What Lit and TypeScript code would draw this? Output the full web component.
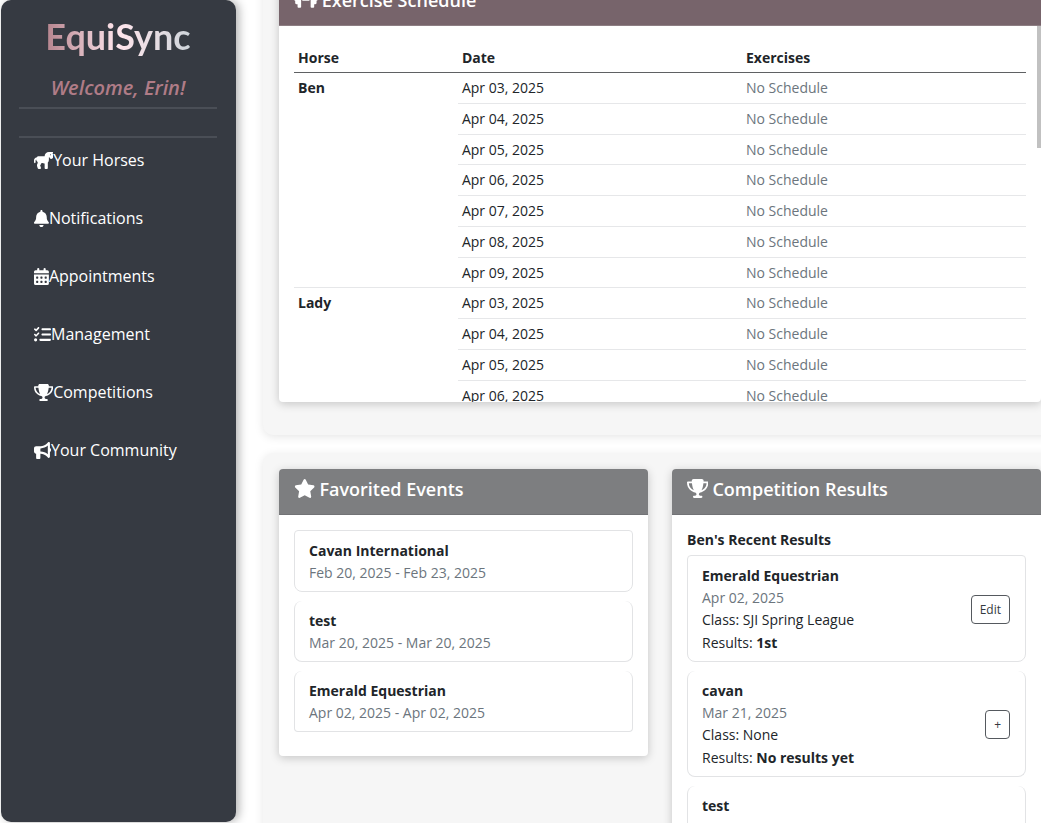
import { LitElement, html, css, svg } from "lit";
import { customElement, property } from "lit/decorators.js";

interface Icon {
  w: number;
  d: string;
}

const icons: Record<string, Icon> = {
  horse: {
    w: 576,
    d: "M448 238.1V160h16l9.8 19.6c12.5 25.1 42.2 36.4 68.3 26c20.5-8.2 33.9-28 33.9-50.1V80c0-19.1-8.4-36.3-21.7-48H560c8.8 0 16-7.2 16-16s-7.2-16-16-16H480 448C377.3 0 320 57.3 320 128H224 203.2 148.8c-30.7 0-57.6 16.3-72.5 40.8C33.2 174.5 0 211.4 0 256v56c0 13.3 10.7 24 24 24s24-10.7 24-24V256c0-13.4 6.6-25.2 16.7-32.5c1.6 13 6.3 25.4 13.6 36.4l28.2 42.4c8.3 12.4 6.4 28.7-1.2 41.6c-16.5 28-20.6 62.2-10 93.9l17.5 52.4c4.4 13.1 16.6 21.9 30.4 21.9h33.7c21.8 0 37.3-21.4 30.4-42.1l-20.8-62.5c-2.1-6.4-.5-13.4 4.3-18.2l12.7-12.7c13.2-13.2 20.6-31.1 20.6-49.7c0-2.3-.1-4.6-.3-6.9l84 24c4.1 1.2 8.2 2.1 12.3 2.8V480c0 17.7 14.3 32 32 32h32c17.7 0 32-14.3 32-32V315.7c19.2-19.2 31.5-45.7 32-75.7h0v-1.9zM496 64a16 16 0 1 1 0 32 16 16 0 1 1 0-32z",
  },
  dumbbell: {
    w: 640,
    d: "M96 64c0-17.7 14.3-32 32-32h32c17.7 0 32 14.3 32 32V224v64V448c0 17.7-14.3 32-32 32H128c-17.7 0-32-14.3-32-32V384H64c-17.7 0-32-14.3-32-32V288c-17.7 0-32-14.3-32-32s14.3-32 32-32V160c0-17.7 14.3-32 32-32H96V64zm448 0v64h32c17.7 0 32 14.3 32 32v64c17.7 0 32 14.3 32 32s-14.3 32-32 32v64c0 17.7-14.3 32-32 32H544v64c0 17.7-14.3 32-32 32H480c-17.7 0-32-14.3-32-32V288 224 64c0-17.7 14.3-32 32-32h32c17.7 0 32 14.3 32 32zM416 224v64H224V224H416z",
  },
  bell: {
    w: 448,
    d: "M224 0c-17.7 0-32 14.3-32 32V51.2C119 66 64 130.6 64 208v18.8c0 47-17.3 92.4-48.5 127.6l-7.4 8.3c-8.4 9.4-10.4 22.9-5.3 34.4S19.4 416 32 416H416c12.6 0 24-7.4 29.2-18.9s3.1-25-5.3-34.4l-7.4-8.3C401.3 319.2 384 273.9 384 226.8V208c0-77.4-55-142-128-156.8V32c0-17.7-14.3-32-32-32zm45.3 493.3c12-12 18.7-28.3 18.7-45.3H224 160c0 17 6.7 33.3 18.7 45.3s28.3 18.7 45.3 18.7s33.3-6.7 45.3-18.7z",
  },
  calendar: {
    w: 448,
    d: "M128 0a32 32 0 0 1 32 32v32h128V32a32 32 0 0 1 64 0v32h48a48 48 0 0 1 48 48v48H0v-48a48 48 0 0 1 48-48h48V32a32 32 0 0 1 32-32zM0 192h448v272a48 48 0 0 1-48 48H48a48 48 0 0 1-48-48zM64 272v32a16 16 0 0 0 16 16h32a16 16 0 0 0 16-16v-32a16 16 0 0 0-16-16H80a16 16 0 0 0-16 16zM192 272v32a16 16 0 0 0 16 16h32a16 16 0 0 0 16-16v-32a16 16 0 0 0-16-16h-32a16 16 0 0 0-16 16zM320 272v32a16 16 0 0 0 16 16h32a16 16 0 0 0 16-16v-32a16 16 0 0 0-16-16h-32a16 16 0 0 0-16 16zM64 400v32a16 16 0 0 0 16 16h32a16 16 0 0 0 16-16v-32a16 16 0 0 0-16-16H80a16 16 0 0 0-16 16zM192 400v32a16 16 0 0 0 16 16h32a16 16 0 0 0 16-16v-32a16 16 0 0 0-16-16h-32a16 16 0 0 0-16 16zM320 400v32a16 16 0 0 0 16 16h32a16 16 0 0 0 16-16v-32a16 16 0 0 0-16-16h-32a16 16 0 0 0-16 16z",
  },
  tasks: {
    w: 512,
    d: "M152.1 38.2c9.9 8.9 10.7 24 1.8 33.9l-72 80c-4.4 4.9-10.6 7.8-17.2 7.9s-12.9-2.4-17.6-7L7 113C-2.3 103.6-2.3 88.4 7 79s24.6-9.4 33.9 0l22.1 22.1 55.1-61.2c8.9-9.9 24-10.7 33.9-1.8zm0 160c9.9 8.9 10.7 24 1.8 33.9l-72 80c-4.4 4.9-10.6 7.8-17.2 7.9s-12.9-2.4-17.6-7L7 273c-9.4-9.4-9.4-24.6 0-33.9s24.6-9.4 33.9 0l22.1 22.1 55.1-61.2c8.9-9.9 24-10.7 33.9-1.8zM224 96c0-17.7 14.3-32 32-32H480c17.7 0 32 14.3 32 32s-14.3 32-32 32H256c-17.7 0-32-14.3-32-32zm0 160c0-17.7 14.3-32 32-32H480c17.7 0 32 14.3 32 32s-14.3 32-32 32H256c-17.7 0-32-14.3-32-32zM160 416c0-17.7 14.3-32 32-32H480c17.7 0 32 14.3 32 32s-14.3 32-32 32H192c-17.7 0-32-14.3-32-32zM48 368a48 48 0 1 1 0 96 48 48 0 1 1 0-96z",
  },
  trophy: {
    w: 576,
    d: "M400 0H176c-26.5 0-48.1 21.8-47.1 48.2c.2 5.3 .4 10.6 .7 15.8H24C10.7 64 0 74.7 0 88c0 92.6 33.5 157 78.5 200.7c44.3 43.1 98.3 64.8 138.1 75.8c23.4 6.5 39.4 26 39.4 45.6c0 20.9-17 37.9-37.9 37.9H192c-17.7 0-32 14.3-32 32s14.3 32 32 32H384c17.7 0 32-14.3 32-32s-14.3-32-32-32H357.9C337 448 320 431 320 410.1c0-19.6 15.9-39.2 39.4-45.6c39.9-11 93.9-32.7 138.2-75.8C542.5 245 576 180.6 576 88c0-13.3-10.7-24-24-24H446.4c.3-5.2 .5-10.4 .7-15.8C448.1 21.8 426.5 0 400 0zM48.9 112h84.4c9.1 90.1 29.2 150.3 51.9 190.6c-24.9-11-50.8-26.5-73.2-48.3c-32-31.1-58-76-63-142.3zM464.1 254.3c-22.4 21.8-48.3 37.3-73.2 48.3c22.7-40.3 42.8-100.5 51.9-190.6h84.4c-5.1 66.3-31.1 111.2-63 142.3z",
  },
  bullhorn: {
    w: 512,
    d: "M480 32c0-12.9-7.8-24.6-19.8-29.6s-25.7-2.2-34.9 6.9L381.7 53c-48 48-113.1 75-181 75H192 160 64c-35.3 0-64 28.7-64 64v96c0 35.3 28.7 64 64 64l0 128c0 17.7 14.3 32 32 32h64c17.7 0 32-14.3 32-32V352l8.7 0c67.9 0 133 27 181 75l43.6 43.6c9.2 9.2 22.9 11.9 34.9 6.9s19.8-16.6 19.8-29.6V300.4c18.6-8.8 32-32.5 32-60.4s-13.4-51.6-32-60.4V32zm-64 76.7V240 371.3C357.2 317.8 280.5 288 200.7 288H192V192h8.7c79.8 0 156.5-29.8 215.3-83.3z",
  },
  star: {
    w: 576,
    d: "M316.9 18C311.6 7 300.4 0 288.1 0s-23.4 7-28.8 18L195 150.3 51.4 171.5c-12 1.8-22 10.2-25.7 21.7s-.7 24.2 7.9 32.7L137.8 329 113.2 474.7c-2 12 3 24.2 12.9 31.3s23 8 33.8 2.3l128.3-68.5 128.3 68.5c10.8 5.7 23.9 4.9 33.8-2.3s14.9-19.3 12.9-31.3L438.5 329 542.7 225.9c8.6-8.5 11.7-21.2 7.9-32.7s-13.7-19.9-25.7-21.7L381.2 150.3 316.9 18z",
  },
};

const glyph = (name: string) => {
  const { w, d } = icons[name];
  return html`<svg class="glyph" viewBox="0 0 ${w} 512" aria-hidden="true">
    ${svg`<path fill="currentColor" fill-rule="evenodd" d=${d}></path>`}
  </svg>`;
};

const dates = [3, 4, 5, 6, 7, 8, 9].map((n) => `Apr 0${n}, 2025`);

@customElement("app-sidebar")
export class AppSidebar extends LitElement {
  @property() user = "";

  private links = [
    ["horse", "Your Horses"],
    ["bell", "Notifications"],
    ["calendar", "Appointments"],
    ["tasks", "Management"],
    ["trophy", "Competitions"],
    ["bullhorn", "Your Community"],
  ];

  static styles = css`
    :host {
      display: flex;
      flex-direction: column;
      box-sizing: border-box;
      padding: 14px 19px 0 18px;
      background: #363a42;
      border-radius: 10px;
      box-shadow: 3px 0 10px rgba(0, 0, 0, 0.3);
      color: #fff;
    }
    .brand {
      margin: 0 0 16px;
      text-align: center;
      font: 700 36px/44px Lato, sans-serif;
    }
    .brand span {
      background: linear-gradient(90deg, #b5838d, #ffe5ec 50%, #ced4da);
      background-clip: text;
      -webkit-background-clip: text;
      color: transparent;
    }
    .welcome {
      margin: 0;
      padding-bottom: 6px;
      border-bottom: 2px solid #4a4e56;
      text-align: center;
      font-size: 20px;
      line-height: 27px;
      font-weight: 600;
      font-style: italic;
      color: #b07c87;
    }
    nav {
      display: flex;
      flex-direction: column;
      margin-top: 27px;
      border-top: 2px solid #4a4e56;
      gap: 14px;
    }
    a {
      display: flex;
      align-items: center;
      height: 44px;
      padding-left: 15px;
      font-size: 16px;
      color: #fff;
      text-decoration: none;
    }
    .glyph {
      height: 17px;
      flex: none;
    }
  `;

  render() {
    return html`
      <h1 class="brand"><span>EquiSync</span></h1>
      <p class="welcome">Welcome, ${this.user}!</p>
      <nav>
        ${this.links.map(([icon, label]) => html`<a href="#${icon}">${glyph(icon)}<span>${label}</span></a>`)}
      </nav>
    `;
  }
}

@customElement("app-card")
export class AppCard extends LitElement {
  @property() heading = "";
  @property() icon = "";
  @property() tone = "";

  static styles = css`
    :host {
      display: block;
      position: relative;
      background: #fff;
      border-radius: 4px;
      overflow: hidden;
      box-shadow: 0 2px 10px rgba(0, 0, 0, 0.2);
    }
    .head {
      display: flex;
      align-items: flex-start;
      gap: 4px;
      box-sizing: border-box;
      height: 46px;
      padding: 8px 15px;
      background: #7d7e80;
      border-bottom: 1px solid #727376;
      color: #fff;
    }
    .head.rose {
      background: #77646b;
      border-bottom-color: #8d7e83;
    }
    h2 {
      margin: 0;
      font-size: 18px;
      line-height: 24px;
      font-weight: 600;
    }
    .glyph {
      height: 19px;
      margin-top: 2px;
      flex: none;
    }
  `;

  render() {
    return html`
      <div class="head ${this.tone}">${glyph(this.icon)}<h2>${this.heading}</h2></div>
      <slot></slot>
    `;
  }
}

@customElement("app-root")
export class AppRoot extends LitElement {
  private horses = ["Ben", "Lady"];

  private events = [
    ["Cavan International", "Feb 20, 2025 - Feb 23, 2025"],
    ["test", "Mar 20, 2025 - Mar 20, 2025"],
    ["Emerald Equestrian", "Apr 02, 2025 - Apr 02, 2025"],
  ];

  private results = [
    { name: "Emerald Equestrian", date: "Apr 02, 2025", cls: "SJI Spring League", result: "1st", action: "Edit" },
    { name: "cavan", date: "Mar 21, 2025", cls: "None", result: "No results yet", action: "+" },
    { name: "test", date: "Mar 20, 2025", cls: "None", result: "No results yet", action: "+" },
  ];

  static styles = css`
    :host {
      display: grid;
      grid-template-columns: 235px minmax(0, 1fr);
      grid-template-rows: minmax(0, 1fr);
      column-gap: 27px;
      box-sizing: border-box;
      height: 100vh;
      padding: 0 0 1px 1px;
      overflow: hidden;
      background: #fff;
      color: #212529;
      font: 14px/22px "Open Sans", "Noto Sans", sans-serif;
    }
    main {
      display: flex;
      flex-direction: column;
      gap: 18px;
      margin: -36px -16px 0 0;
    }
    .panel {
      flex: none;
      padding: 16px 16px 33px;
      background: #f6f6f6;
      border-radius: 10px;
      box-shadow: 0 2px 10px rgba(0, 0, 0, 0.1);
    }
    .pair {
      display: grid;
      grid-template-columns: 1fr 1fr;
      align-items: start;
      gap: 24px;
    }
    .body {
      padding: 15px;
    }
    .scroll {
      box-sizing: border-box;
      height: 376px;
      padding-top: 16px;
      overflow-y: auto;
      scrollbar-width: none;
    }
    .thumb {
      position: absolute;
      top: 46px;
      right: 0;
      width: 4px;
      height: 122px;
      background: #c1c1c1;
    }
    table {
      width: 100%;
      height: 462px;
      border-collapse: collapse;
      table-layout: fixed;
      line-height: 20px;
    }
    th,
    td {
      padding: 5px 4px 4px;
      text-align: left;
      vertical-align: top;
      border-bottom: 1px solid #e6e7e9;
    }
    thead th {
      padding-top: 6px;
      border-bottom-color: #5f6163;
    }
    .c-horse {
      width: 22.4%;
    }
    .c-date {
      width: 38.8%;
    }
    th,
    strong {
      font-weight: 700;
    }
    .muted {
      color: #6c757d;
    }
    ul {
      display: flex;
      flex-direction: column;
      gap: 9px;
      margin: 0 0 9px;
      padding: 0;
      list-style: none;
    }
    li {
      display: flex;
      align-items: center;
      justify-content: space-between;
      padding: 9px 15px 7px 14px;
      border: 1px solid #e2e3e5;
      border-top-width: 0;
      border-radius: 8px;
    }
    li:first-child {
      border-top-width: 1px;
      border-top-left-radius: 4px;
      border-top-right-radius: 4px;
    }
    li:last-child {
      border-bottom-left-radius: 4px;
      border-bottom-right-radius: 4px;
    }
    .score {
      line-height: 23px;
    }
    h3 {
      margin: 0 0 5px;
      font-size: 14px;
      line-height: 20px;
    }
    button {
      height: 29px;
      padding: 0 8px;
      border: 1px solid #55595e;
      border-radius: 4px;
      background: #fff;
      color: #343a40;
      font: 12px/20px "Open Sans", "Noto Sans", sans-serif;
    }
  `;

  render() {
    return html`
      <app-sidebar user="Erin"></app-sidebar>
      <main>
        <section class="panel">
          <app-card heading="Exercise Schedule" icon="dumbbell" tone="rose">
            <div class="body scroll">
              <table>
                <colgroup>
                  <col class="c-horse" />
                  <col class="c-date" />
                  <col />
                </colgroup>
                <thead>
                  <tr>
                    <th>Horse</th>
                    <th>Date</th>
                    <th>Exercises</th>
                  </tr>
                </thead>
                <tbody>
                  ${this.horses.map((horse) =>
                    dates.map(
                      (date, i) => html`<tr>
                        ${i === 0 ? html`<th rowspan=${dates.length}>${horse}</th>` : null}
                        <td>${date}</td>
                        <td class="muted">No Schedule</td>
                      </tr>`
                    )
                  )}
                </tbody>
              </table>
            </div>
            <div class="thumb"></div>
          </app-card>
        </section>
        <section class="panel pair">
          <app-card heading="Favorited Events" icon="star">
            <div class="body">
              <ul>
                ${this.events.map(
                  ([name, range]) => html`<li>
                    <div>
                      <strong>${name}</strong>
                      <div class="muted">${range}</div>
                    </div>
                  </li>`
                )}
              </ul>
            </div>
          </app-card>
          <app-card heading="Competition Results" icon="trophy">
            <div class="body">
              <h3>Ben's Recent Results</h3>
              <ul>
                ${this.results.map(
                  (r) => html`<li>
                    <div>
                      <strong>${r.name}</strong>
                      <div class="muted">${r.date}</div>
                      <div>Class: ${r.cls}</div>
                      <div class="score">Results: <strong>${r.result}</strong></div>
                    </div>
                    <button type="button">${r.action}</button>
                  </li>`
                )}
              </ul>
            </div>
          </app-card>
        </section>
      </main>
    `;
  }
}
